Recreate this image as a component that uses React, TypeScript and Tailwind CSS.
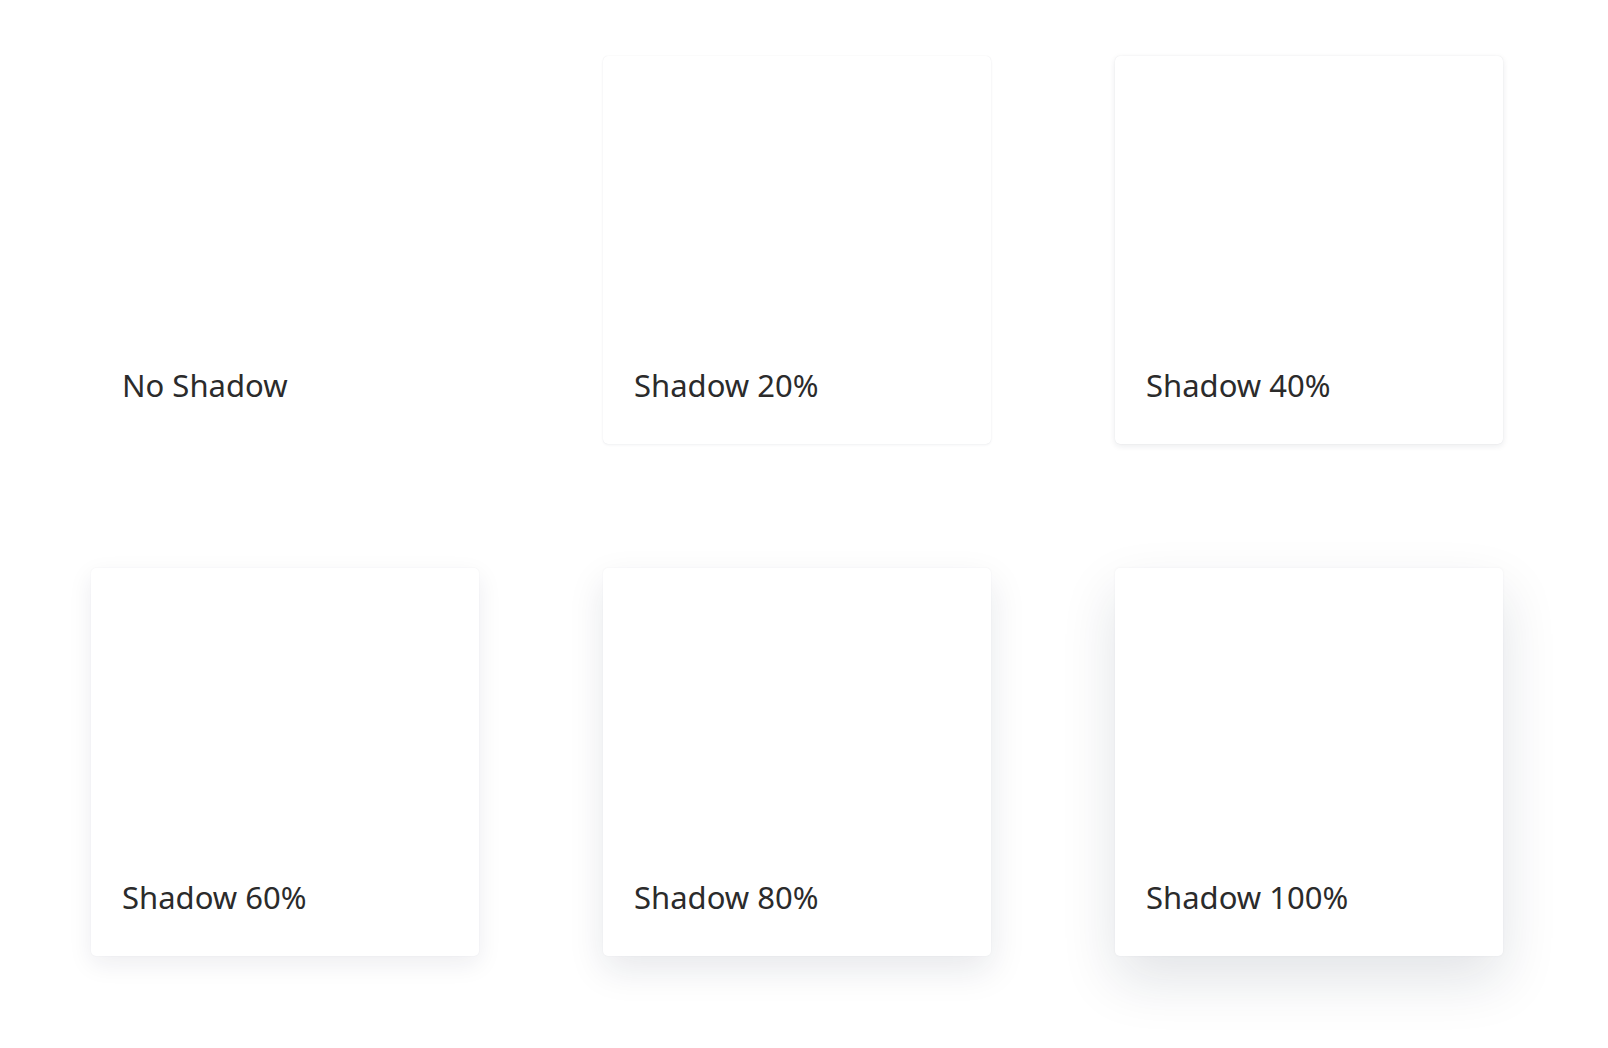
import React from "react";

const cards: { label: string; cls: string }[] = [
  { label: "No Shadow", cls: "" },
  {
    label: "Shadow 20%",
    cls: "shadow-[0_0_1px_rgba(20,30,60,0.10),0_1px_3px_rgba(20,30,60,0.06)]",
  },
  {
    label: "Shadow 40%",
    cls: "shadow-[0_0_1px_rgba(20,30,60,0.12),0_2px_6px_rgba(20,30,60,0.09)]",
  },
  {
    label: "Shadow 60%",
    cls: "shadow-[0_0_2px_rgba(20,30,60,0.06),0_8px_24px_rgba(20,30,60,0.08)]",
  },
  {
    label: "Shadow 80%",
    cls: "shadow-[0_0_2px_rgba(20,30,60,0.06),0_14px_36px_rgba(20,30,60,0.10)]",
  },
  {
    label: "Shadow 100%",
    cls: "shadow-[0_0_3px_rgba(20,30,60,0.05),0_24px_56px_rgba(20,30,60,0.12)]",
  },
];

export default function App() {
  return (
    <div className="min-h-screen w-full bg-white pl-[91px] pt-[56px]">
      <div className="grid grid-cols-[388px_388px_388px] gap-x-[124px] gap-y-[124px]">
        {cards.map((c) => (
          <div
            key={c.label}
            className={`flex h-[388px] w-[388px] flex-col justify-end rounded-[5px] bg-white px-[31px] pb-[41px] ${c.cls}`}
          >
            <span
              className="text-[31px] font-normal leading-[36px] text-[#2b2b2b]"
              style={{ fontFamily: '"Noto Sans", "Open Sans", sans-serif', letterSpacing: "0px" }}
            >
              {c.label}
            </span>
          </div>
        ))}
      </div>
    </div>
  );
}
